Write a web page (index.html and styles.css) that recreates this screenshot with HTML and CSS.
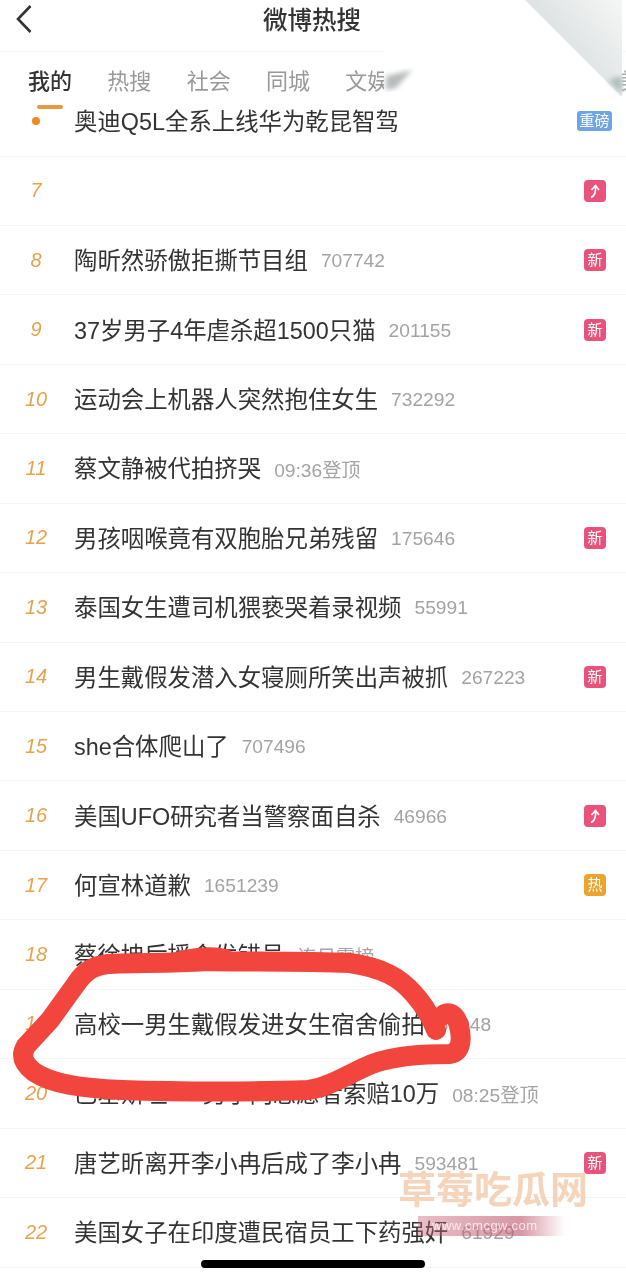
FILE: index.html
```html
<html><head>
<meta charset="UTF-8">
<meta name="viewport" content="width=device-width, initial-scale=1.0">
<title>微博热搜</title>
<link rel="stylesheet" href="styles.css">
</head>
<body>
  <div class="page">
    <header class="top-bar">
      <svg class="back" width="18" height="30" viewBox="0 0 18 30"><path d="M15.5 2 L3 15 L15.5 28" fill="none" stroke="#333" stroke-width="2.6"/></svg>
      <h1>微博热搜</h1>
    </header>

    <nav class="tabs">
      <a class="tab active">我的</a>
      <a class="tab">热搜</a>
      <a class="tab">社会</a>
      <a class="tab">同城</a>
      <a class="tab">文娱</a>
    </nav>

    <ul class="list">
      <li class="row first">
        <span class="rank"><i class="dot"></i></span>
        <span class="title">奥迪Q5L全系上线华为乾昆智驾</span>
        <span class="badge wide">重磅</span>
      </li>
      <li class="row">
        <span class="rank">7</span>
        <span class="badge up">
          <svg width="14" height="16" viewBox="0 0 14 16"><path d="M3 14.5 C6.5 13 8 8.5 7.5 3 M3.5 7 L7.5 2.5 L11 7" fill="none" stroke="#fff" stroke-width="1.7"/></svg>
        </span>
      </li>
      <li class="row">
        <span class="rank">8</span>
        <span class="title">陶昕然骄傲拒撕节目组</span>
        <span class="meta">707742</span>
        <span class="badge new">新</span>
      </li>
      <li class="row">
        <span class="rank">9</span>
        <span class="title">37岁男子4年虐杀超1500只猫</span>
        <span class="meta">201155</span>
        <span class="badge new">新</span>
      </li>
      <li class="row">
        <span class="rank">10</span>
        <span class="title">运动会上机器人突然抱住女生</span>
        <span class="meta">732292</span>
      </li>
      <li class="row">
        <span class="rank">11</span>
        <span class="title">蔡文静被代拍挤哭</span>
        <span class="meta">09:36登顶</span>
      </li>
      <li class="row">
        <span class="rank">12</span>
        <span class="title">男孩咽喉竟有双胞胎兄弟残留</span>
        <span class="meta">175646</span>
        <span class="badge new">新</span>
      </li>
      <li class="row">
        <span class="rank">13</span>
        <span class="title">泰国女生遭司机猥亵哭着录视频</span>
        <span class="meta">55991</span>
      </li>
      <li class="row">
        <span class="rank">14</span>
        <span class="title">男生戴假发潜入女寝厕所笑出声被抓</span>
        <span class="meta">267223</span>
        <span class="badge new">新</span>
      </li>
      <li class="row">
        <span class="rank">15</span>
        <span class="title">she合体爬山了</span>
        <span class="meta">707496</span>
      </li>
      <li class="row">
        <span class="rank">16</span>
        <span class="title">美国UFO研究者当警察面自杀</span>
        <span class="meta">46966</span>
        <span class="badge up">
          <svg width="14" height="16" viewBox="0 0 14 16"><path d="M3 14.5 C6.5 13 8 8.5 7.5 3 M3.5 7 L7.5 2.5 L11 7" fill="none" stroke="#fff" stroke-width="1.7"/></svg>
        </span>
      </li>
      <li class="row">
        <span class="rank">17</span>
        <span class="title">何宣林道歉</span>
        <span class="meta">1651239</span>
        <span class="badge hot">热</span>
      </li>
      <li class="row">
        <span class="rank">18</span>
        <span class="title">蔡徐坤后援会发错号</span>
        <span class="meta">连日霸榜</span>
      </li>
      <li class="row">
        <span class="rank">19</span>
        <span class="title">高校一男生戴假发进女生宿舍偷拍</span>
        <span class="meta">61048</span>
      </li>
      <li class="row">
        <span class="rank">20</span>
        <span class="title">巴基斯坦&ensp;一男子向志愿者索赔10万</span>
        <span class="meta">08:25登顶</span>
      </li>
      <li class="row">
        <span class="rank">21</span>
        <span class="title">唐艺昕离开李小冉后成了李小冉</span>
        <span class="meta">593481</span>
        <span class="badge new">新</span>
      </li>
      <li class="row">
        <span class="rank">22</span>
        <span class="title">美国女子在印度遭民宿员工下药强奸</span>
        <span class="meta">61929</span>
      </li>
    </ul>

    <!-- 右上角的反光遮挡 -->
    <span class="tab-edge">美</span>
    <svg class="glare" width="626" height="110" viewBox="0 0 626 110">
      <defs>
        <linearGradient id="foldRight" gradientUnits="userSpaceOnUse" x1="570" y1="50" x2="622" y2="8">
          <stop offset="0" stop-color="#dfe3e3"/>
          <stop offset="1" stop-color="#f4f5f5"/>
        </linearGradient>
        <filter id="soft"><feGaussianBlur stdDeviation="2.5"/></filter>
      </defs>
      <polygon points="384,0 525,0 622,97 622,108 384,108" fill="#fff"/>
      <polygon points="525,0 622,0 622,97" fill="url(#foldRight)"/>
      <polygon points="608,80 622,94 622,76" fill="#aebdbd" filter="url(#soft)"/>
      <polygon points="386,76 386,90 396,88 412,70" fill="#b8bbbb" filter="url(#soft)"/>
    </svg>

    <!-- 红笔圈出 -->
    <svg class="scribble" width="626" height="170" viewBox="0 940 626 170">
      <path d="M436 1030 C430 1014 422 1003 414 994 C400 978 384 968 350 963 C300 961 240 962 205 961 C170 964 130 962 108 964 C92 966 84 972 76 984 L50 1020 L26 1046 C20 1056 24 1064 34 1072 C52 1084 80 1088 122 1090 C180 1092 260 1092 308 1090 C330 1087 352 1072 372 1064 C396 1055 425 1054 450 1054 C462 1052 462 1038 459 1026 C456 1014 448 1010 442 1016" fill="none" stroke="#f1453d" stroke-width="20" stroke-linecap="round" stroke-linejoin="round"/>
      <path d="M168 962 C185 955 210 952 226 956" fill="none" stroke="#f1453d" stroke-width="14" stroke-linecap="round"/>
    </svg>

    <div class="watermark">草莓吃瓜网</div>
    <div class="watermark-band">www.cmcgw.com</div>
    <div class="home-bar"></div>
  </div>
</body></html>
```

FILE: styles.css
```css
body {
  margin: 0;
  background-color: #fff;
  font-family: "Liberation Sans", "Noto Sans CJK SC", sans-serif;
  color: #333;
}
.page {
  position: relative;
  width: 626px;
  height: 1280px;
  overflow: hidden;
  filter: blur(0.4px);
}
.top-bar {
  height: 52px;
  display: flex;
  align-items: center;
  justify-content: center;
  padding-right: 2px;
  border-bottom: 1px solid #f5f5f5;
  box-sizing: border-box;
}
.top-bar h1 {
  margin: 0 0 14px;
  font-size: 24.5px;
  font-weight: 500;
  color: #333;
}
.back {
  position: absolute;
  left: 15px;
  top: 4px;
}
.tabs {
  height: 56px;
  display: flex;
  gap: 35.3px;
  padding: 14px 0 0 28px;
  box-sizing: border-box;
  white-space: nowrap;
}
.tab {
  position: relative;
  font-size: 22px;
  line-height: 32px;
  color: #999;
}
.tab.active {
  color: #333;
  font-weight: 500;
}
.tab.active::after {
  content: "";
  position: absolute;
  left: 9px;
  top: 39px;
  width: 26px;
  height: 4px;
  border-radius: 2px;
  background-color: #e9993a;
}
.tab-edge {
  position: absolute;
  left: 619px;
  top: 66px;
  font-size: 22px;
  line-height: 32px;
  color: #aaa;
}
.list {
  list-style-type: none;
  margin: 0;
  padding: 0;
}
.row {
  height: 69.45px;
  display: flex;
  align-items: center;
  padding-right: 20px;
  border-bottom: 1px solid #f3f3f3;
  box-sizing: border-box;
}
.row.first {
  height: 48.5px;
  padding-bottom: 22px;
}
.rank {
  width: 74px;
  padding-right: 2px;
  box-sizing: border-box;
  flex-shrink: 0;
  text-align: center;
  font-size: 20px;
  font-style: italic;
  color: #e6a24c;
}
.dot {
  display: inline-block;
  width: 8px;
  height: 8px;
  border-radius: 50%;
  background-color: #ee8a25;
  vertical-align: middle;
}
.title {
  padding-top: 2px;
  font-size: 23.4px;
  line-height: 32px;
  color: #333;
  white-space: nowrap;
}
.meta {
  margin-left: 13px;
  padding-top: 2px;
  font-size: 19.2px;
  color: #a3a3a3;
  white-space: nowrap;
}
.badge {
  margin-left: auto;
  width: 22px;
  height: 22px;
  border-radius: 4px;
  display: flex;
  align-items: center;
  justify-content: center;
  font-size: 15px;
  line-height: 22px;
  color: #fff;
}
.badge.new, .badge.up {
  background-color: #e9527a;
}
.badge.hot {
  background-color: #eba52e;
}
.badge.wide {
  width: 35px;
  height: 20px;
  margin-right: -6px;
  border-radius: 3px;
  background-color: #6ea5e4;
  font-size: 15px;
}
.glare {
  position: absolute;
  left: 0;
  top: 0;
}
.scribble {
  position: absolute;
  left: 0;
  top: 940px;
}
.watermark {
  position: absolute;
  left: 398px;
  top: 1165px;
  font-size: 38px;
  line-height: 50px;
  font-weight: 700;
  color: rgba(240, 196, 160, 0.72);
  white-space: nowrap;
}
.watermark-band {
  position: absolute;
  left: 418px;
  top: 1216px;
  width: 147px;
  height: 20px;
  padding-left: 14px;
  box-sizing: border-box;
  background: linear-gradient(90deg, rgba(195, 95, 115, 0.4), rgba(195, 95, 115, 0.65) 70%, rgba(195, 95, 115, 0));
  font-size: 13px;
  line-height: 20px;
  letter-spacing: 0.5px;
  color: rgba(255, 255, 255, 0.75);
  white-space: nowrap;
}
.home-bar {
  position: absolute;
  left: 201px;
  top: 1260px;
  width: 224px;
  height: 8px;
  border-radius: 4px;
  background-color: #000;
}
```
